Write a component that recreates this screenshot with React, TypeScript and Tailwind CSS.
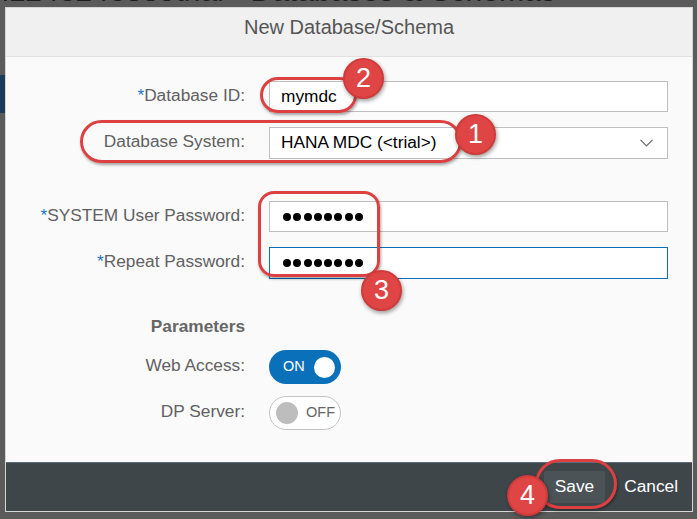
import React from 'react';

const Label = ({ text, required }: { text: string; required?: boolean }) => (
  <div className="w-[239px] shrink-0 pb-[4px] text-right text-[17.3px] leading-[20px] text-[#616161]">
    {required && <span className="text-[#1b74c9]">*</span>}
    {text}
  </div>
);

const Dots = () => (
  <div className="flex items-center gap-[2.3px]">
    {[0, 1, 2, 3, 4, 5, 6, 7].map((i) => (
      <span key={i} className="block w-[8px] h-[8px] rounded-full bg-black" />
    ))}
  </div>
);

const Badge = ({ n, className }: { n: string; className: string }) => (
  <div
    className={`absolute w-[41px] h-[41px] rounded-full bg-[#e04545] border-2 border-[#cf3a3a] shadow-[1px_2px_4px_rgba(0,0,0,0.4)] flex items-center justify-center text-white text-[27px] leading-none ${className}`}
  >
    {n}
  </div>
);

const App = () => {
  return (
    <div className="relative w-[697px] h-[519px] overflow-hidden bg-[#5b5b5b] font-['Liberation_Sans',Arial,sans-serif]">
      {/* page behind the dialog */}
      <div className="h-full">
        <div className="-mt-[24px] pl-[2px] text-[30px] leading-[30px] text-[#1d1d1d] whitespace-nowrap">
          i1243243885trial - Databases &amp; Schemas
        </div>
        <div className="mt-[69px] w-[5px] h-[38px] bg-[#1d3a5b]" />
      </div>

      {/* dialog */}
      <div className="absolute left-[5px] top-[7px] w-[688px] h-[505px] flex flex-col border border-[#d6d6d6] bg-[#fafafa]">
        <div className="h-[49px] shrink-0 bg-[#f0f0f0] border-b border-[#e2e2e2] pt-[9px] text-center text-[20px] leading-[20px] text-[#555]">
          New Database/Schema
        </div>

        <div className="flex-1 flex flex-col pt-[24px]">
          <div className="flex items-center h-[31px]">
            <Label text="Database ID:" required />
            <div className="ml-[24px] w-[399px] h-full bg-white border border-[#bfbfbf] flex items-center pl-[11px] text-[17.3px] text-black">
              mymdc
            </div>
          </div>

          <div className="flex items-center h-[32px] mt-[15px]">
            <Label text="Database System:" />
            <div className="ml-[24px] w-[399px] h-full bg-white border border-[#bfbfbf] flex items-center justify-between pl-[11px] pr-[14px] text-[17.3px] text-black">
              <span>HANA MDC (&lt;trial&gt;)</span>
              <svg width="13" height="8" viewBox="0 0 13 8" fill="none">
                <polyline points="0.5,0.8 6.5,6.8 12.5,0.8" stroke="#6a6a6a" strokeWidth="1.2" />
              </svg>
            </div>
          </div>

          <div className="flex items-center h-[31px] mt-[42px]">
            <Label text="SYSTEM User Password:" required />
            <div className="ml-[24px] w-[399px] h-full bg-white border border-[#bfbfbf] flex items-center pl-[13px]">
              <Dots />
            </div>
          </div>

          <div className="flex items-center h-[32px] mt-[15px]">
            <Label text="Repeat Password:" required />
            <div className="ml-[24px] w-[399px] h-full bg-white border border-[#0a6fb8] flex items-center pl-[13px]">
              <Dots />
            </div>
          </div>

          <div className="flex items-center h-[24px] mt-[36px]">
            <div className="w-[239px] text-right text-[17.3px] font-bold text-[#666]">Parameters</div>
          </div>

          <div className="flex items-center h-[34px] mt-[11px]">
            <Label text="Web Access:" />
            <div className="ml-[24px] w-[72px] h-full rounded-full bg-[#0a70ba] flex items-center pl-[14px] pr-[6px] justify-between">
              <span className="text-white text-[14.5px]">ON</span>
              <span className="block w-[21px] h-[21px] rounded-full bg-white" />
            </div>
          </div>

          <div className="flex items-center h-[34px] mt-[12px]">
            <Label text="DP Server:" />
            <div className="ml-[24px] w-[72px] h-full rounded-full bg-white border border-[#c4c4c4] flex items-center pl-[6px] gap-[8px]">
              <span className="block w-[22px] h-[22px] rounded-full bg-[#bdbdbd]" />
              <span className="text-[#666] text-[14.5px]">OFF</span>
            </div>
          </div>
        </div>

        <div className="h-[49px] shrink-0 bg-[#3f4649] border-t border-[#5d6b78] flex items-center justify-end gap-[8px] pr-[3px]">
          <button className="h-[32px] px-[11px] bg-[#4b5357] rounded-[2px] text-white text-[17.3px]">Save</button>
          <button className="h-[32px] px-[11px] text-white text-[17.3px]">Cancel</button>
        </div>
      </div>

      {/* annotations */}
      <div className="absolute left-[260px] top-[77px] w-[97px] h-[36px] rounded-full border-[3px] border-[#dc4040] shadow-[1px_2px_3px_rgba(0,0,0,0.35)]" />
      <div className="absolute left-[80px] top-[120px] w-[382px] h-[43px] rounded-[22px] border-[3px] border-[#dc4040] shadow-[1px_2px_3px_rgba(0,0,0,0.35)]" />
      <div className="absolute left-[258px] top-[191px] w-[122px] h-[86px] rounded-[16px] border-[3px] border-[#dc4040] shadow-[1px_2px_3px_rgba(0,0,0,0.35)]" />
      <div className="absolute left-[535px] top-[459px] w-[82px] h-[50px] rounded-full border-[3px] border-[#dc4040] shadow-[1px_2px_3px_rgba(0,0,0,0.35)]" />

      <Badge n="2" className="left-[343px] top-[58px]" />
      <Badge n="1" className="left-[455px] top-[114px]" />
      <Badge n="3" className="left-[361px] top-[270px]" />
      <Badge n="4" className="left-[507px] top-[475px]" />
    </div>
  );
};

export default App;
